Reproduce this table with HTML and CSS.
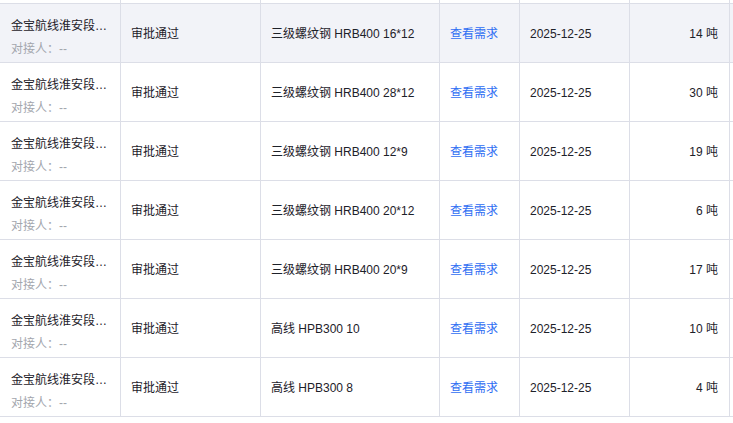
FILE: index.html
```html
<!DOCTYPE html>
<html lang="zh-CN">
<head>
<meta charset="utf-8">
<title>需求列表</title>
<link rel="stylesheet" href="styles.css">
</head>
<body>
<div class="table">
  <div class="row row-prev">
    <div class="cell c1"></div><div class="cell c2"></div><div class="cell c3"></div><div class="cell c4"></div><div class="cell c5"></div><div class="cell c6"></div><div class="cell c7"></div>
  </div>
  <div class="row row-hover">
    <div class="cell c1 stack"><span class="name">金宝航线淮安段…</span><span class="contact">对接人：--</span></div>
    <div class="cell c2">审批通过</div>
    <div class="cell c3">三级螺纹钢 HRB400 16*12</div>
    <div class="cell c4"><a class="link">查看需求</a></div>
    <div class="cell c5">2025-12-25</div>
    <div class="cell c6 num">14 吨</div>
    <div class="cell c7"></div>
  </div>
  <div class="row">
    <div class="cell c1 stack"><span class="name">金宝航线淮安段…</span><span class="contact">对接人：--</span></div>
    <div class="cell c2">审批通过</div>
    <div class="cell c3">三级螺纹钢 HRB400 28*12</div>
    <div class="cell c4"><a class="link">查看需求</a></div>
    <div class="cell c5">2025-12-25</div>
    <div class="cell c6 num">30 吨</div>
    <div class="cell c7"></div>
  </div>
  <div class="row">
    <div class="cell c1 stack"><span class="name">金宝航线淮安段…</span><span class="contact">对接人：--</span></div>
    <div class="cell c2">审批通过</div>
    <div class="cell c3">三级螺纹钢 HRB400 12*9</div>
    <div class="cell c4"><a class="link">查看需求</a></div>
    <div class="cell c5">2025-12-25</div>
    <div class="cell c6 num">19 吨</div>
    <div class="cell c7"></div>
  </div>
  <div class="row">
    <div class="cell c1 stack"><span class="name">金宝航线淮安段…</span><span class="contact">对接人：--</span></div>
    <div class="cell c2">审批通过</div>
    <div class="cell c3">三级螺纹钢 HRB400 20*12</div>
    <div class="cell c4"><a class="link">查看需求</a></div>
    <div class="cell c5">2025-12-25</div>
    <div class="cell c6 num">6 吨</div>
    <div class="cell c7"></div>
  </div>
  <div class="row">
    <div class="cell c1 stack"><span class="name">金宝航线淮安段…</span><span class="contact">对接人：--</span></div>
    <div class="cell c2">审批通过</div>
    <div class="cell c3">三级螺纹钢 HRB400 20*9</div>
    <div class="cell c4"><a class="link">查看需求</a></div>
    <div class="cell c5">2025-12-25</div>
    <div class="cell c6 num">17 吨</div>
    <div class="cell c7"></div>
  </div>
  <div class="row">
    <div class="cell c1 stack"><span class="name">金宝航线淮安段…</span><span class="contact">对接人：--</span></div>
    <div class="cell c2">审批通过</div>
    <div class="cell c3">高线 HPB300 10</div>
    <div class="cell c4"><a class="link">查看需求</a></div>
    <div class="cell c5">2025-12-25</div>
    <div class="cell c6 num">10 吨</div>
    <div class="cell c7"></div>
  </div>
  <div class="row">
    <div class="cell c1 stack"><span class="name">金宝航线淮安段…</span><span class="contact">对接人：--</span></div>
    <div class="cell c2">审批通过</div>
    <div class="cell c3">高线 HPB300 8</div>
    <div class="cell c4"><a class="link">查看需求</a></div>
    <div class="cell c5">2025-12-25</div>
    <div class="cell c6 num">4 吨</div>
    <div class="cell c7"></div>
  </div>
</div>
</body>
</html>
```

FILE: styles.css
```css
html, body {
  margin: 0;
  padding: 0;
  background: #ffffff;
  overflow: hidden;
}

body {
  font-family: "Liberation Sans", "Noto Sans CJK SC", sans-serif;
  font-size: 12px;
  color: #1d2129;
}

.table {
  width: 733px;
  height: 423px;
  overflow: hidden;
}

.row {
  display: grid;
  grid-template-columns: 121px 140px 179px 80px 110px 100px 3px;
  height: 59px;
  border-bottom: 1px solid #dcdee7;
  box-sizing: border-box;
  background: #ffffff;
}

.row-prev {
  height: 4px;
}

.row-hover {
  background: #f2f3f8;
}

.cell {
  box-sizing: border-box;
  border-right: 1px solid #dcdee7;
  padding: 1px 10px 0 10px;
  display: flex;
  align-items: center;
  white-space: nowrap;
  overflow: hidden;
  line-height: 18px;
}

.c7 {
  border-right: none;
  padding: 0;
}

.stack {
  flex-direction: column;
  align-items: flex-start;
  justify-content: flex-start;
  padding-top: 13px;
  padding-left: 11px;
}

.name {
  display: block;
  white-space: nowrap;
}

.contact {
  display: block;
  margin-top: 5px;
  color: #a3a6ad;
}

.link {
  color: #2f6ef3;
  cursor: pointer;
  text-decoration: none;
}

.num {
  justify-content: flex-end;
  padding-right: 11px;
}
```
